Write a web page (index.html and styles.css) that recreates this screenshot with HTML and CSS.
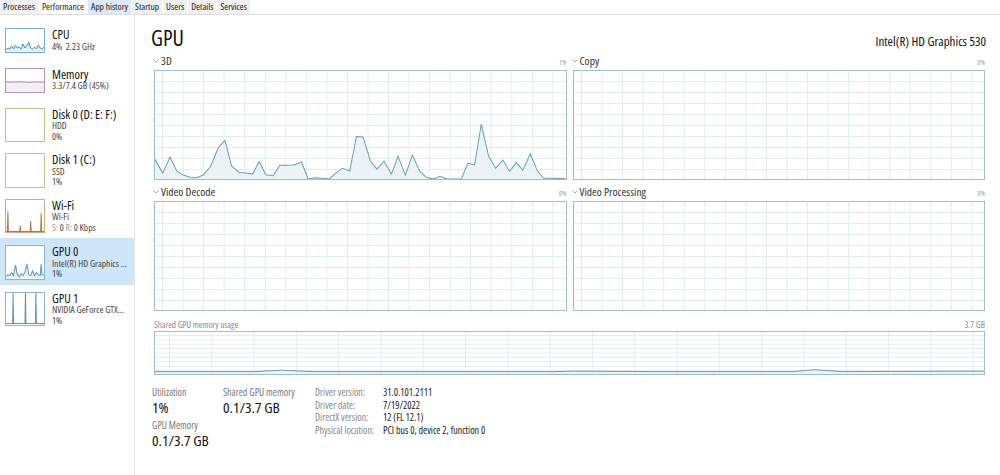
FILE: index.html
```html
<!DOCTYPE html>
<html>
  <head>
    <title>Task Manager - GPU</title>
    <link rel="stylesheet" href="styles.css">
  </head>
  <body>
    <div class="tabs">
      <span class="tab">Processes</span>
      <span class="tab active">Performance</span>
      <span class="tab hover">App history</span>
      <span class="tab">Startup</span>
      <span class="tab">Users</span>
      <span class="tab">Details</span>
      <span class="tab">Services</span>
    </div>

    <div class="window">
      <aside class="sidebar">
        <div class="item short">
          <div class="thumb cpu">
            <svg viewBox="0 0 40 24" preserveAspectRatio="none">
              <polygon class="fill" points="0,24 0,22 2,20 4,21 6,18 8,21 10,17 12,20 14,19 16,21 18,16 20,20 22,18 24,14 26,20 28,21 30,19 32,21 34,17 36,20 38,21 40,19 40,24"/>
              <polyline class="line" points="0,22 2,20 4,21 6,18 8,21 10,17 12,20 14,19 16,21 18,16 20,20 22,18 24,14 26,20 28,21 30,19 32,21 34,17 36,20 38,21 40,19"/>
            </svg>
          </div>
          <div class="info">
            <div class="name">CPU</div>
            <div class="sub">4%&nbsp; 2.23 GHz</div>
          </div>
        </div>

        <div class="item short">
          <div class="thumb memory">
            <svg viewBox="0 0 40 24" preserveAspectRatio="none">
              <polygon class="fill" points="0,24 0,13.5 8,13.8 16,13.4 24,13.9 32,13.6 40,13.8 40,24"/>
              <polyline class="line" points="0,13.5 8,13.8 16,13.4 24,13.9 32,13.6 40,13.8"/>
            </svg>
          </div>
          <div class="info">
            <div class="name">Memory</div>
            <div class="sub">3.3/7.4 GB (45%)</div>
          </div>
        </div>

        <div class="item">
          <div class="thumb disk"></div>
          <div class="info">
            <div class="name">Disk 0 (D: E: F:)</div>
            <div class="sub">HDD</div>
            <div class="sub">0%</div>
          </div>
        </div>

        <div class="item">
          <div class="thumb disk"></div>
          <div class="info">
            <div class="name">Disk 1 (C:)</div>
            <div class="sub">SSD</div>
            <div class="sub">1%</div>
          </div>
        </div>

        <div class="item">
          <div class="thumb wifi">
            <svg viewBox="0 0 40 34" preserveAspectRatio="none">
              <polyline class="line" points="0,33 1.5,33 2,12 2.5,33 14.5,33 15,27 15.5,33 25.5,33 26,22 26.5,33 36.5,33 37,14 37.5,33 40,33"/>
            </svg>
          </div>
          <div class="info">
            <div class="name">Wi-Fi</div>
            <div class="sub">Wi-Fi</div>
            <div class="sub"><span class="dim">S:</span> 0 <span class="dim">R:</span> 0 Kbps</div>
          </div>
        </div>

        <div class="item selected">
          <div class="thumb gpu">
            <svg viewBox="0 0 40 34" preserveAspectRatio="none">
              <polygon class="fill" points="0,34 0,32 2,30 4,31 6,28 8,31 10,20 12,30 14,32 16,29 18,31 20,27 22,19 24,30 26,31 28,26 30,31 32,28 34,30 36,31 37,19 38,30 40,31 40,34"/>
              <polyline class="line" points="0,32 2,30 4,31 6,28 8,31 10,20 12,30 14,32 16,29 18,31 20,27 22,19 24,30 26,31 28,26 30,31 32,28 34,30 36,31 37,19 38,30 40,31"/>
            </svg>
          </div>
          <div class="info">
            <div class="name">GPU 0</div>
            <div class="sub">Intel(R) HD Graphics ...</div>
            <div class="sub">1%</div>
          </div>
        </div>

        <div class="item">
          <div class="thumb gpu">
            <svg viewBox="0 0 40 34" preserveAspectRatio="none">
              <polyline class="line" points="0,32 7,32 7.5,0 8,32 20,32 20.5,0 21,32 31,32 31.5,0 32,32 40,32"/>
            </svg>
          </div>
          <div class="info">
            <div class="name">GPU 1</div>
            <div class="sub">NVIDIA GeForce GTX...</div>
            <div class="sub">1%</div>
          </div>
        </div>
      </aside>

      <main class="detail">
        <div class="head">
          <h1>GPU</h1>
          <span class="model">Intel(R) HD Graphics 530</span>
        </div>

        <div class="charts">
          <div class="block">
            <div class="label">
              <span class="title"><svg class="chev" viewBox="0 0 6 4"><polyline points="0.5,0.5 3,3 5.5,0.5"/></svg>3D</span>
              <span class="pct">1%</span>
            </div>
            <div class="chart">
              <svg viewBox="0 0 411 110" preserveAspectRatio="none">
                <polygon class="fill" points="0,110 0,90 7.7,104 15,87.7 21.7,101.7 28.3,106 35,108.3 41.7,108.7 48.3,106 55.7,97.3 63.3,78.3 70,70.7 76.7,96.7 84.3,103.3 91,104 97.7,105 104.3,92.3 111,105.7 118.3,106.7 125,96 131.7,96 139,95.7 146.7,92.7 153.3,110 160,108.7 167.7,109.3 174.3,110 181,104 187.7,99 195,101.7 201.7,66.7 208.3,67.3 215.7,91.7 222.3,100 229.3,91.7 236.7,105 243.3,86.7 250.7,106 257.7,85.7 265,101.7 271.7,108.3 278.3,110 285.7,107.3 292.3,110 306.7,110 313.3,94 320,95.7 326.7,54 334,86.7 341,99 348.3,90.7 355,102.3 361.7,93.3 368.3,101 375.7,84.3 383.3,102.7 389.3,109.3 396.7,109.3 411,109.7 411,110"/>
                <polyline class="line" points="0,90 7.7,104 15,87.7 21.7,101.7 28.3,106 35,108.3 41.7,108.7 48.3,106 55.7,97.3 63.3,78.3 70,70.7 76.7,96.7 84.3,103.3 91,104 97.7,105 104.3,92.3 111,105.7 118.3,106.7 125,96 131.7,96 139,95.7 146.7,92.7 153.3,110 160,108.7 167.7,109.3 174.3,110 181,104 187.7,99 195,101.7 201.7,66.7 208.3,67.3 215.7,91.7 222.3,100 229.3,91.7 236.7,105 243.3,86.7 250.7,106 257.7,85.7 265,101.7 271.7,108.3 278.3,110 285.7,107.3 292.3,110 306.7,110 313.3,94 320,95.7 326.7,54 334,86.7 341,99 348.3,90.7 355,102.3 361.7,93.3 368.3,101 375.7,84.3 383.3,102.7 389.3,109.3 396.7,109.3 411,109.7"/>
              </svg>
            </div>
          </div>

          <div class="block">
            <div class="label">
              <span class="title"><svg class="chev" viewBox="0 0 6 4"><polyline points="0.5,0.5 3,3 5.5,0.5"/></svg>Copy</span>
              <span class="pct">0%</span>
            </div>
            <div class="chart"></div>
          </div>

          <div class="block">
            <div class="label">
              <span class="title"><svg class="chev" viewBox="0 0 6 4"><polyline points="0.5,0.5 3,3 5.5,0.5"/></svg>Video Decode</span>
              <span class="pct">0%</span>
            </div>
            <div class="chart"></div>
          </div>

          <div class="block">
            <div class="label">
              <span class="title"><svg class="chev" viewBox="0 0 6 4"><polyline points="0.5,0.5 3,3 5.5,0.5"/></svg>Video Processing</span>
              <span class="pct">0%</span>
            </div>
            <div class="chart"></div>
          </div>
        </div>

        <div class="shared">
          <div class="label small">
            <span>Shared GPU memory usage</span>
            <span>3.7 GB</span>
          </div>
          <div class="chart wide">
            <svg viewBox="0 0 832 44" preserveAspectRatio="none">
              <polygon class="fill" points="0,44 0,41.5 100,41.5 127,40 160,41.5 400,41.5 420,41 500,41.5 640,41.5 662,39.5 690,41.5 832,41 832,44"/>
              <polyline class="line" points="0,41.5 100,41.5 127,40 160,41.5 400,41.5 420,41 500,41.5 640,41.5 662,39.5 690,41.5 832,41"/>
            </svg>
          </div>
        </div>

        <div class="stats">
          <div class="stat-col first">
            <div class="stat">
              <div class="stat-label">Utilization</div>
              <div class="stat-value">1%</div>
            </div>
            <div class="stat">
              <div class="stat-label">GPU Memory</div>
              <div class="stat-value">0.1/3.7 GB</div>
            </div>
          </div>
          <div class="stat-col second">
            <div class="stat">
              <div class="stat-label">Shared GPU memory</div>
              <div class="stat-value">0.1/3.7 GB</div>
            </div>
          </div>
          <table class="driver">
            <tr><td class="key">Driver version:</td><td>31.0.101.2111</td></tr>
            <tr><td class="key">Driver date:</td><td>7/19/2022</td></tr>
            <tr><td class="key">DirectX version:</td><td>12 (FL 12.1)</td></tr>
            <tr><td class="key">Physical location:</td><td>PCI bus 0, device 2, function 0</td></tr>
          </table>
        </div>
      </main>
    </div>
  </body>
</html>
```

FILE: styles.css
```css
body {
  margin: 0;
  height: 475px;
  overflow: hidden;
  background-color: #fff;
  color: #111;
  font-family: "Open Sans", "Noto Sans", sans-serif;
  font-stretch: 80%;
}

/* tab strip */
.tabs {
  display: flex;
  height: 14px;
  border-bottom: 1px solid #dedede;
  font-size: 9.5px;
  line-height: 14px;
}
.tab {
  padding: 0 3px;
  margin-right: 1px;
  background-color: #f0f0f0;
  color: #222;
}
.tab.active {
  background-color: #fff;
}
.tab.hover {
  background-color: #d9eaf9;
}

.window {
  display: flex;
  height: 460px;
}

/* left list */
.sidebar {
  width: 134px;
  flex-shrink: 0;
  padding-top: 6.5px;
  border-right: 1px solid #e6e6e6;
}
.item {
  display: flex;
  gap: 7px;
  padding: 6.5px 0 4.5px 5px;
}
.item.short {
  padding-bottom: 8.5px;
}
.item.selected {
  padding-top: 7.5px;
  padding-bottom: 5.5px;
  background-color: #cde6f8;
}
.thumb {
  width: 40px;
  flex-shrink: 0;
  box-sizing: border-box;
  border: 1px solid #999;
  background-color: #fff;
}
.thumb svg {
  display: block;
  width: 100%;
  height: 100%;
}
.thumb .line {
  fill: none;
  stroke-width: 1;
  vector-effect: non-scaling-stroke;
}
.thumb.cpu { border-color: #7aaed4; }
.thumb.cpu .line { stroke: #3f8cc4; }
.thumb.cpu .fill { fill: #e4eff8; }
.thumb.memory { border-color: #b290c6; }
.thumb.memory .line { stroke: #a47cba; }
.thumb.memory .fill { fill: #f3eef6; }
.thumb.disk { border-color: #a8d08c; }
.thumb.wifi { border-color: #d6a87c; }
.thumb.wifi .line { stroke: #b8743a; }
.thumb.gpu { border-color: #8fb5c3; }
.thumb.gpu .line { stroke: #5d95b0; }
.thumb.gpu .fill { fill: #e9f2f6; }

.info .name {
  font-size: 12.5px;
  line-height: 13.5px;
  color: #111;
  white-space: nowrap;
}
.info .sub {
  font-size: 9.5px;
  line-height: 10.5px;
  color: #444;
  white-space: nowrap;
}
.info .dim {
  color: #999;
}

/* right panel */
.detail {
  flex: 1;
  padding: 0 15px 0 19px;
}
.head {
  display: flex;
  justify-content: space-between;
  align-items: baseline;
  height: 24px;
  padding-top: 10px;
  margin-bottom: 5px;
}
.head h1 {
  margin: 0 0 0 -3px;
  font-size: 22px;
  line-height: 24px;
  font-weight: normal;
}
.head .model {
  font-size: 13px;
  margin-right: -1px;
}

.charts {
  display: grid;
  grid-template-columns: 1fr 1fr;
  column-gap: 6px;
  row-gap: 5px;
}
.label {
  display: flex;
  justify-content: space-between;
  align-items: baseline;
  height: 13px;
  line-height: 13px;
  margin-bottom: 3px;
}
.label .title {
  font-size: 11.5px;
  color: #333;
}
.chev {
  width: 6px;
  height: 4px;
  margin: 0 2px 2px -1px;
  vertical-align: middle;
}
.chev polyline {
  fill: none;
  stroke: #999;
  stroke-width: 0.8;
}
.label .pct {
  font-size: 7px;
  color: #999;
}

.chart {
  height: 110px;
  box-sizing: border-box;
  border: 1px solid #9dbfcb;
  background-image:
    linear-gradient(90deg, #e2ecf0 1px, transparent 1px),
    linear-gradient(#e2ecf0 1px, transparent 1px);
  background-size: 20.55px 100%, 100% 11px;
  background-position: 7px 0, 0 10px;
}
.chart svg {
  display: block;
  width: 100%;
  height: 100%;
}
.chart .line {
  fill: none;
  stroke: #6a9db5;
  stroke-width: 1;
  vector-effect: non-scaling-stroke;
}
.chart .fill {
  fill: #e8f1f6;
  fill-opacity: 0.85;
}

.shared {
  margin-top: 8px;
}
.label.small {
  height: 11px;
  line-height: 11px;
  margin-bottom: 1px;
  font-size: 9px;
  color: #888;
}
.chart.wide {
  height: 44px;
  background-size: 42.3px 100%, 100% 4.4px;
  background-position: 14px 0, 0 3px;
}

/* numbers at the bottom */
.stats {
  display: flex;
  align-items: flex-start;
  margin: 12px 0 0 -2px;
}
.stat-col.first {
  width: 71px;
}
.stat-col.second {
  width: 92px;
}
.stat {
  margin-bottom: 4px;
}
.stat-label {
  font-size: 10px;
  line-height: 11px;
  color: #777;
  white-space: nowrap;
}
.stat-value {
  font-size: 15.3px;
  line-height: 18px;
  color: #111;
  white-space: nowrap;
}
.driver {
  border-collapse: collapse;
  margin-top: -1px;
  font-size: 10px;
  line-height: 12.6px;
  color: #222;
}
.driver td {
  padding: 0;
  white-space: nowrap;
}
.driver .key {
  width: 68px;
  color: #888;
}
```
